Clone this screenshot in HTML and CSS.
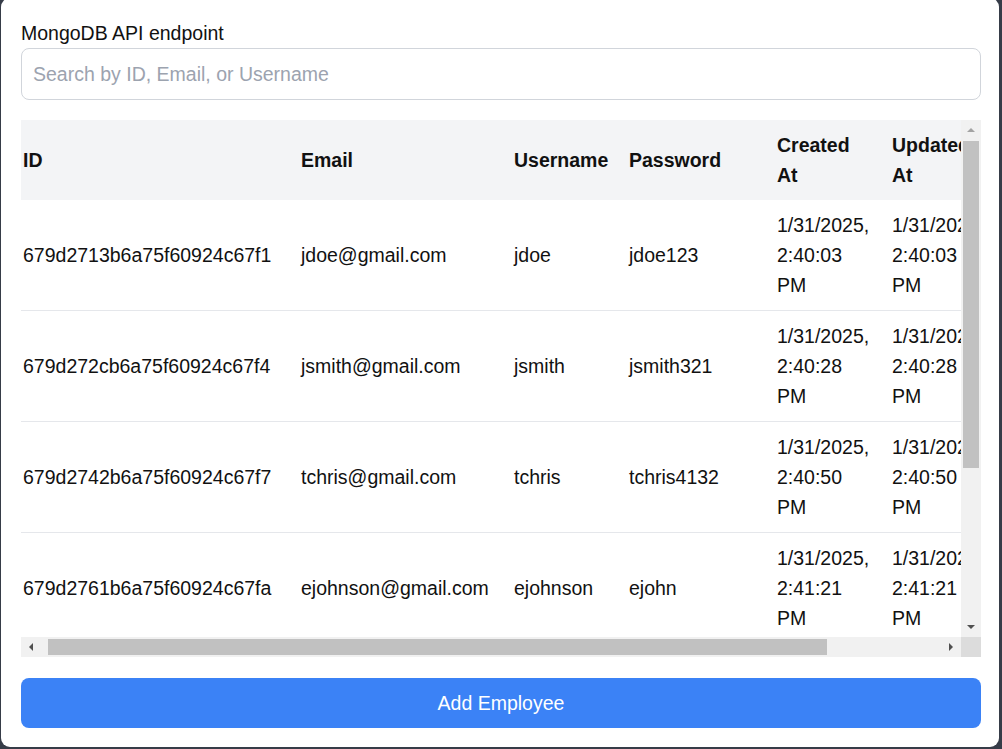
FILE: index.html
```html
<!DOCTYPE html>
<html lang="en">
<head>
<meta charset="utf-8">
<title>Employees</title>
<link rel="stylesheet" href="styles.css">
</head>
<body>
<div class="card">
  <label class="label" for="search">MongoDB API endpoint</label>
  <input class="search" id="search" type="text" placeholder="Search by ID, Email, or Username">
  <div class="table-box">
    <div class="viewport">
      <table class="table">
        <colgroup>
          <col class="c-id"><col class="c-email"><col class="c-user"><col class="c-pass"><col class="c-date"><col class="c-date">
        </colgroup>
        <thead>
          <tr><th>ID</th><th>Email</th><th>Username</th><th>Password</th><th>Created At</th><th>Updated At</th></tr>
        </thead>
        <tbody>
          <tr><td>679d2713b6a75f60924c67f1</td><td>jdoe@gmail.com</td><td>jdoe</td><td>jdoe123</td><td>1/31/2025, 2:40:03 PM</td><td>1/31/2025, 2:40:03 PM</td></tr>
          <tr><td>679d272cb6a75f60924c67f4</td><td>jsmith@gmail.com</td><td>jsmith</td><td>jsmith321</td><td>1/31/2025, 2:40:28 PM</td><td>1/31/2025, 2:40:28 PM</td></tr>
          <tr><td>679d2742b6a75f60924c67f7</td><td>tchris@gmail.com</td><td>tchris</td><td>tchris4132</td><td>1/31/2025, 2:40:50 PM</td><td>1/31/2025, 2:40:50 PM</td></tr>
          <tr><td>679d2761b6a75f60924c67fa</td><td>ejohnson@gmail.com</td><td>ejohnson</td><td>ejohn</td><td>1/31/2025, 2:41:21 PM</td><td>1/31/2025, 2:41:21 PM</td></tr>
        </tbody>
      </table>
    </div>
    <div class="vbar">
      <div class="sb-btn"><span class="arrow arrow-up"></span></div>
      <div class="vtrack"><div class="vthumb"></div></div>
      <div class="sb-btn"><span class="arrow arrow-down"></span></div>
    </div>
    <div class="hbar">
      <div class="sb-btn"><span class="arrow arrow-left"></span></div>
      <div class="htrack"><div class="hthumb"></div></div>
      <div class="sb-btn"><span class="arrow arrow-right"></span></div>
    </div>
    <div class="corner"></div>
  </div>
  <button class="add-btn" type="button">Add Employee</button>
</div>
</body>
</html>
```

FILE: styles.css
```css
html, body {
  margin: 0;
  padding: 0;
}
body {
  background: #363c48;
  height: 749px;
  overflow: hidden;
  font-family: "Liberation Sans", Arial, sans-serif;
  font-size: 19.5px;
  line-height: 30px;
  color: #111;
}
.card {
  box-sizing: border-box;
  width: 998px;
  margin: -2px 0 0 1px;
  padding: 20px 18px 19px 20px;
  background: #fff;
  border-radius: 9px;
  display: flex;
  flex-direction: column;
}
.label {
  display: block;
  line-height: 30px;
  color: #111;
}
.search {
  box-sizing: border-box;
  width: 100%;
  height: 52px;
  margin: 0;
  padding: 10px 11px;
  border: 1px solid #d1d5db;
  border-radius: 8px;
  font: inherit;
  color: #111;
  outline: none;
}
.search::placeholder {
  color: #9ca3af;
}

/* table with classic scrollbars */
.table-box {
  margin-top: 20px;
  display: grid;
  grid-template-columns: 1fr 20px;
  grid-template-rows: 517px 20px;
}
.viewport {
  overflow: hidden;
}
.table {
  table-layout: fixed;
  width: 984px;
  border-collapse: collapse;
}
.c-id { width: 278px; }
.c-email { width: 213px; }
.c-user { width: 115px; }
.c-pass { width: 148px; }
.c-date { width: 115px; }
.table th,
.table td {
  padding: 10px 16px 10px 2px;
  text-align: left;
  vertical-align: middle;
  line-height: 30px;
  white-space: normal;
}
.table thead tr {
  background: #f3f4f6;
}
.table th {
  font-weight: bold;
}
.table tbody tr {
  border-bottom: 1px solid #e5e7eb;
}

.vbar,
.hbar {
  background: #f1f1f1;
  display: flex;
}
.vbar {
  flex-direction: column;
}
.sb-btn {
  flex: 0 0 20px;
  width: 20px;
  height: 20px;
  display: flex;
  align-items: center;
  justify-content: center;
}
.vtrack {
  flex: 1;
  padding-top: 1px;
}
.vthumb {
  height: 327px;
  margin: 0 2px;
  background: #c1c1c1;
}
.htrack {
  flex: 1;
  display: flex;
  align-items: center;
}
.hthumb {
  width: 779px;
  height: 16px;
  margin-left: 7px;
  background: #c1c1c1;
}
.corner {
  background: #dcdcdc;
}
.arrow {
  width: 0;
  height: 0;
  border-style: solid;
  border-color: transparent;
}
.arrow-up {
  border-width: 0 4px 4px 4px;
  border-bottom-color: #a3a3a3;
}
.arrow-down {
  border-width: 4px 4px 0 4px;
  border-top-color: #505050;
}
.arrow-left {
  border-width: 4px 4px 4px 0;
  border-right-color: #505050;
}
.arrow-right {
  border-width: 4px 0 4px 4px;
  border-left-color: #505050;
}

.add-btn {
  margin-top: 21px;
  width: 100%;
  height: 50px;
  padding: 10px;
  border: none;
  border-radius: 8px;
  background: #3b82f6;
  color: #fff;
  font: inherit;
  line-height: 30px;
}
```
